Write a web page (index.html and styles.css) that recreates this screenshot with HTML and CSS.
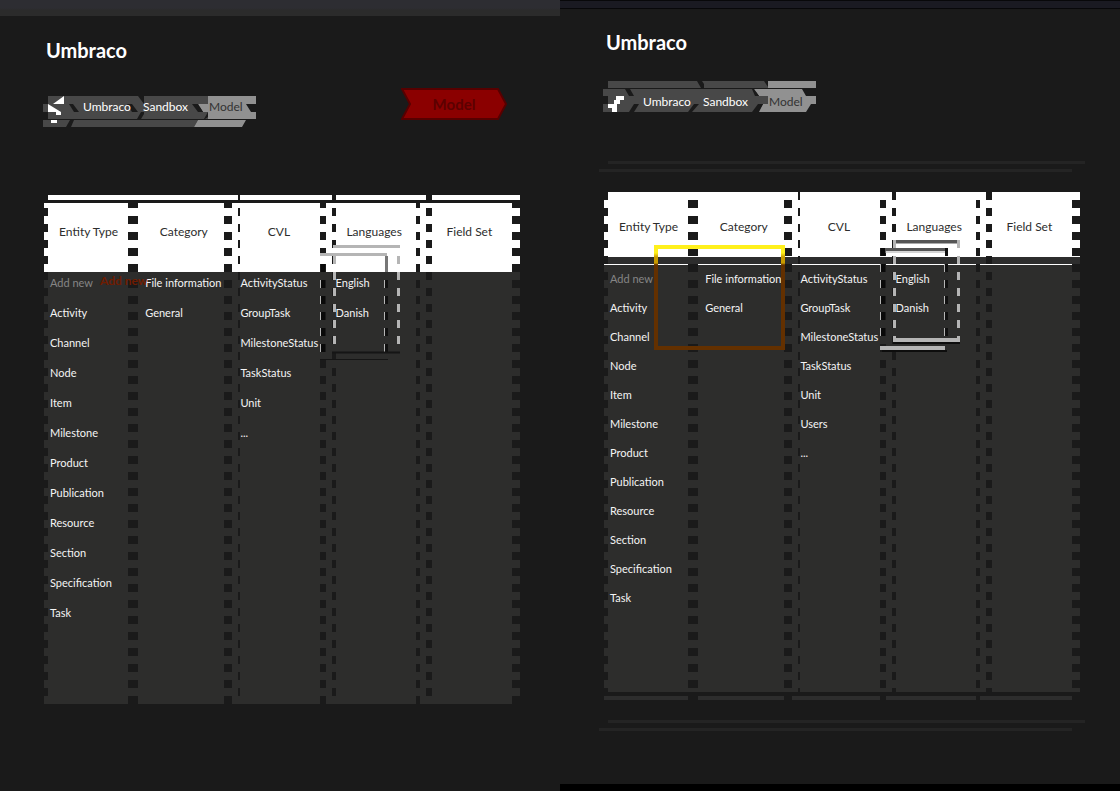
FILE: index.html
```html
<!DOCTYPE html>
<html lang="en">
<head>
<meta charset="utf-8">
<title>Umbraco – Model</title>
<link rel="stylesheet" href="styles.css">
</head>
<body>
<main class="split">
  <section class="pane pane-old">
    <div class="topbar"></div>
    <div class="content">
      <h1 class="title">Umbraco</h1>
      <nav class="crumbs" aria-label="Breadcrumb">
        <svg class="crumb-art" width="213" height="31" viewBox="43 96 213 31" aria-hidden="true">
          <path fill="#484848" d="M48 96H208V104H48ZM43 104H200V112H43ZM48 112H208V119H48ZM43 120H198L194 127H43Z"/>
          <path fill="#919191" d="M208 96H256V104H208ZM198 104H246L251 112H203ZM208 112H256V119H208ZM198 120H246L242 127H194Z"/>
          <path fill="#1a1a1a" d="M138 96H144V104ZM69 104H73L79 112H74ZM127 104H132L138 112H132ZM192 104H198L203 112H198ZM144 112V114L141 119H137L141 112ZM70 120H74L71 127H66ZM208 112V117L205 119H204Z"/>
          <path fill="#fff" d="M64 96V104H53ZM48 104L61 112H48ZM56 112H61V115H56ZM51 120H57V123H51Z"/>
        </svg>
        <a class="crumb crumb-home" href="#" aria-label="Home"></a>
        <a class="crumb crumb-a" href="#">Umbraco</a>
        <a class="crumb crumb-b" href="#">Sandbox</a>
        <a class="crumb crumb-c" href="#">Model</a>
        <span class="marker"><svg class="marker-art" width="106" height="32" viewBox="0 0 106 32" aria-hidden="true"><path d="M1 1H97L105 16L97 31H1L9 16Z" fill="#8b0000" stroke="#570000" stroke-width="2"/></svg><span class="marker-text">Model</span></span>
      </nav>
      <div class="board">
        <table class="grid">
          <thead><tr><th>Entity Type</th><th>Category</th><th>CVL</th><th>Languages</th><th>Field Set</th></tr></thead>
          <tbody>
            <tr><td class="muted">Add new</td><td>File information</td><td>ActivityStatus</td><td>English</td><td></td></tr>
            <tr><td>Activity</td><td>General</td><td>GroupTask</td><td>Danish</td><td></td></tr>
            <tr><td>Channel</td><td></td><td>MilestoneStatus</td><td></td><td></td></tr>
            <tr><td>Node</td><td></td><td>TaskStatus</td><td></td><td></td></tr>
            <tr><td>Item</td><td></td><td>Unit</td><td></td><td></td></tr>
            <tr><td>Milestone</td><td></td><td>...</td><td></td><td></td></tr>
            <tr><td>Product</td><td></td><td></td><td></td><td></td></tr>
            <tr><td>Publication</td><td></td><td></td><td></td><td></td></tr>
            <tr><td>Resource</td><td></td><td></td><td></td><td></td></tr>
            <tr><td>Section</td><td></td><td></td><td></td><td></td></tr>
            <tr><td>Specification</td><td></td><td></td><td></td><td></td></tr>
            <tr><td>Task</td><td></td><td></td><td></td><td></td></tr>
          </tbody>
        </table>
        <span class="added">Add new</span>
        <svg class="frames" width="82" height="120" viewBox="320 240 82 120" aria-hidden="true">
          <path d="M333 246.500H400M320 254.500H387" stroke="#b5b5b5" stroke-width="3"/>
          <path d="M334.500 256V344M398.500 256V352" stroke="#b5b5b5" stroke-width="3" stroke-dasharray="8"/>
          <path d="M323 264V352" stroke="#090909" stroke-width="4" stroke-dasharray="8"/>
          <path d="M320.500 280V352M384.500 280V352" stroke="#b5b5b5" stroke-dasharray="8"/>
          <path d="M386.500 264V352" stroke="#101010" stroke-width="3" stroke-dasharray="8"/>
          <path d="M386.500 256V272" stroke="#777" stroke-width="3"/>
          <path d="M332 352.500H400M320 360H388" stroke="#151515" stroke-width="2"/>
        </svg>
      </div>
    </div>
  </section>

  <section class="pane pane-new">
    <div class="topbar"></div>
    <div class="content">
      <h1 class="title">Umbraco</h1>
      <nav class="crumbs" aria-label="Breadcrumb">
        <svg class="crumb-art" width="213" height="31" viewBox="603 81 213 31" aria-hidden="true">
          <path fill="#484848" d="M608 81H768V88H608ZM603 89H756V96H603ZM608 96H768V104H608ZM603 104H760L754 112H603Z"/>
          <path fill="#919191" d="M768 81H816V88H768ZM754 89H802L806 96H759ZM768 96H816V104H768ZM763 104H811L806 112H759Z"/>
          <path fill="#1a1a1a" d="M697 81H702L704 84V88H701ZM764 81H768V87ZM625 89H630L634 96H629ZM752 89H754L759 96H755ZM634 104H639L634 112H629ZM694 104H699L692 112H688ZM758 104H763L758 112H752Z"/>
          <path fill="#fff" d="M616 96H624V100H620V104H614V100H616ZM608 104H617V112H612V108H608Z"/>
        </svg>
        <a class="crumb crumb-home" href="#" aria-label="Home"></a>
        <a class="crumb crumb-a" href="#">Umbraco</a>
        <a class="crumb crumb-b" href="#">Sandbox</a>
        <a class="crumb crumb-c" href="#">Model</a>
      </nav>
      <div class="rules"></div>
      <div class="board">
        <table class="grid">
          <thead><tr><th>Entity Type</th><th>Category</th><th>CVL</th><th>Languages</th><th>Field Set</th></tr></thead>
          <tbody>
            <tr><td class="muted">Add new</td><td>File information</td><td>ActivityStatus</td><td>English</td><td></td></tr>
            <tr><td>Activity</td><td>General</td><td>GroupTask</td><td>Danish</td><td></td></tr>
            <tr><td>Channel</td><td></td><td>MilestoneStatus</td><td></td><td></td></tr>
            <tr><td>Node</td><td></td><td>TaskStatus</td><td></td><td></td></tr>
            <tr><td>Item</td><td></td><td>Unit</td><td></td><td></td></tr>
            <tr><td>Milestone</td><td></td><td>Users</td><td></td><td></td></tr>
            <tr><td>Product</td><td></td><td>...</td><td></td><td></td></tr>
            <tr><td>Publication</td><td></td><td></td><td></td><td></td></tr>
            <tr><td>Resource</td><td></td><td></td><td></td><td></td></tr>
            <tr><td>Section</td><td></td><td></td><td></td><td></td></tr>
            <tr><td>Specification</td><td></td><td></td><td></td><td></td></tr>
            <tr><td>Task</td><td></td><td></td><td></td><td></td></tr>
          </tbody>
        </table>
        <div class="highlight"></div>
        <svg class="frames" width="82" height="112" viewBox="880 240 82 112" aria-hidden="true">
          <path d="M893 241.500H960M882 249.500H947" stroke="#555" stroke-width="3"/>
          <path d="M895 243.500H958M885 252H945" stroke="#aaa"/>
          <path d="M894.500 240V342M958.500 240V342" stroke="#b5b5b5" stroke-width="3" stroke-dasharray="8"/>
          <path d="M883 248V344" stroke="#090909" stroke-width="4" stroke-dasharray="8"/>
          <path d="M880.500 264V344M944.500 264V344" stroke="#b5b5b5" stroke-dasharray="8"/>
          <path d="M946.500 248V344" stroke="#101010" stroke-width="3" stroke-dasharray="8"/>
          <path d="M893 343H960M882 351H947" stroke="#0d0d0d" stroke-width="2"/>
          <path d="M893 340H960M880 348H945" stroke="#b5b5b5" stroke-width="4"/>
        </svg>
      </div>
      <div class="rules rules-end"></div>
    </div>
    <div class="bottombar"></div>
  </section>
</main>
</body>
</html>
```
FILE: styles.css
```css
* { box-sizing: border-box; }

body {
  margin: 0;
  background: #1a1a1a;
  color: #f4f4f4;
  font-family: Lato, "Open Sans", sans-serif;
  font-size: 12px;
}

.split {
  display: grid;
  grid-template-columns: 1fr 1fr;
  min-height: 100vh;
}

.pane {
  display: flex;
  flex-direction: column;
  min-width: 0;
}

.topbar {
  height: 16px;
  background: linear-gradient(#2d2d32 8px, #2b2b2b 10px);
}

.pane-new .topbar {
  height: 9px;
  background: #1a1a22;
  border-top: 1px solid #08080a;
  border-bottom: 1px solid #08080a;
}

.content {
  flex: 1;
  padding: 16px 40px 0 43px;
}

.pane-new .content { padding-top: 15px; }

.title {
  margin: 0;
  padding-left: 3px;
  height: 64px;
  font-size: 20px;
  line-height: 36px;
  font-weight: 700;
  color: #fff;
}

.pane-new .title {
  height: 57px;
}

.crumbs {
  position: relative;
  display: flex;
  align-items: center;
  height: 31px;
}

.pane-new .crumbs { padding-top: 10px; }
.pane-old .crumbs { padding-bottom: 10px; }

.crumb-art {
  position: absolute;
  left: 0;
  top: 0;
}

.crumb {
  position: relative;
  color: #fff;
  font-size: 12px;
  line-height: 16px;
  text-decoration: none;
}

.crumb-home { width: 40px; height: 16px; }
.crumb-a { width: 60px; }
.crumb-b { width: 66px; }
.crumb-c { color: #333; }

.marker {
  position: absolute;
  right: 13px;
  top: -8px;
  height: 32px;
}

.marker-art { display: block; }

.marker-text {
  position: absolute;
  inset: 0;
  text-align: center;
  font-size: 15px;
  font-weight: 700;
  line-height: 32px;
  color: #5c0000;
}

.rules {
  height: 11px;
  margin: 49px -5px 20px -4px;
  background:
    linear-gradient(#242424, #242424) 9px 0 / calc(100% - 9px) 3px no-repeat,
    linear-gradient(#242424, #242424) 0 8px / calc(100% - 13px) 3px no-repeat;
}

.rules-end { margin-top: 20px; margin-bottom: 0; }

.board {
  position: relative;
  margin-left: 1px;
}

.pane-old .board { margin-top: 68px; }

/* Two interleaved sets of 8px rows form the stepped column edges. */
.board::before,
.board::after {
  content: "";
  position: absolute;
  inset: 0;
  pointer-events: none;
}

.board::before {
  background: linear-gradient(to right,
    #1a1a1a 0 4px, transparent 4px 40.76%, #1a1a1a 40.76% 41.18%,
    transparent 41.18% 60.5%, #1a1a1a 60.5% 61.34%,
    transparent 61.34% 80.25%, #1a1a1a 80.25% 81.51%, transparent 81.51%);
  mask: repeating-linear-gradient(#000 0 8px, transparent 8px 16px);
}

.board::after {
  background: linear-gradient(to right,
    transparent 0 17.65%, #1a1a1a 17.65% 19.75%, transparent 19.75% 37.82%,
    #1a1a1a 37.82% 39.5%, transparent 39.5% 57.98%, #1a1a1a 57.98% 59.24%,
    transparent 59.24% 78.15%, #1a1a1a 78.15% 78.99%,
    transparent 78.99% 98.32%, #1a1a1a 98.32%);
  mask: repeating-linear-gradient(transparent 0 8px, #000 8px 16px);
}

.pane-old .board::before { mask: repeating-linear-gradient(#000 0 5px, transparent 5px 13px, #000 13px 16px); }
.pane-old .board::after { mask: repeating-linear-gradient(transparent 0 5px, #000 5px 13px, transparent 13px 16px); }

.grid {
  width: 100%;
  table-layout: fixed;
  border-collapse: collapse;
  background: #2d2d2c;
}

.grid th {
  height: 77px;
  padding: 0 6px 4px 0;
  background: linear-gradient(#fff 5px, #1a1a1a 5px 8px, #fff 8px);
  color: #2d2d2d;
  font-size: 12px;
  font-weight: 400;
  line-height: 16px;
}

.pane-new .grid th {
  height: 73px;
  background: linear-gradient(#fff 65px, #2d2d2d 65px 72px, #fff 72px);
}

.grid td {
  height: 30px;
  padding: 0 0 8px 6px;
  font-size: 11px;
  line-height: 14px;
  white-space: nowrap;
}

.pane-new .grid td { height: 29px; padding-bottom: 2px; }

.grid .muted { color: #858585; }

.grid tbody::after {
  content: "";
  display: table-row;
  height: 72px;
}

.pane-new .board {
  background: linear-gradient(#1a1a1a 4px, #2d2d2d 4px) bottom / 100% 8px no-repeat;
  padding-bottom: 8px;
}

.pane-new .grid tbody::after { height: 79px; }

.added {
  position: absolute;
  z-index: 1;
  left: 56px;
  top: 77px;
  color: #701c00;
  font-size: 12px;
  font-weight: 700;
  line-height: 18px;
}

.frames {
  position: absolute;
  left: 58%;
  top: 45px;
  z-index: 1;
}

.pane-new .frames { top: 48px; }

.highlight {
  position: absolute;
  z-index: 1;
  left: 10.5%;
  top: 53px;
  width: 131px;
  height: 105px;
  border: 4px solid #633000;
  border-image: linear-gradient(#fff01c 0 8px, #c99b00 12px 18px, #633000 20px) 4;
}

.bottombar {
  height: 7px;
  background: #000;
}
```
